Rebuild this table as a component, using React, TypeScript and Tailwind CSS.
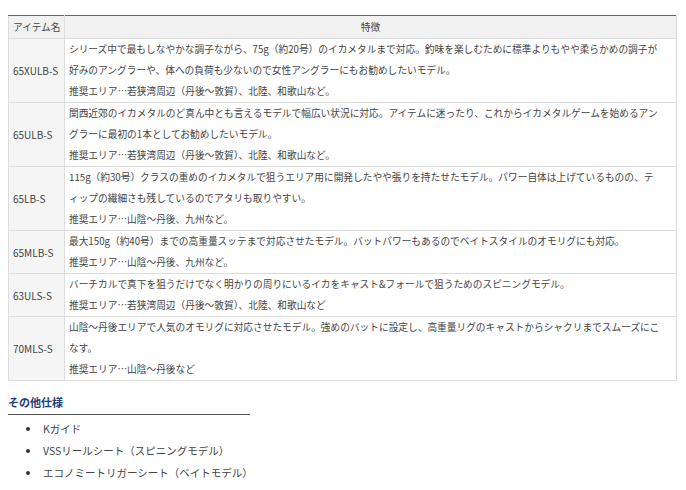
const rows: { name: string; lines: string[] }[] = [
  {
    name: '65XULB-S',
    lines: [
      'シリーズ中で最もしなやかな調子ながら、75g（約20号）のイカメタルまで対応。釣味を楽しむために標準よりもやや柔らかめの調子が',
      '好みのアングラーや、体への負荷も少ないので女性アングラーにもお勧めしたいモデル。',
      '推奨エリア…若狭湾周辺（丹後～敦賀）、北陸、和歌山など。',
    ],
  },
  {
    name: '65ULB-S',
    lines: [
      '関西近郊のイカメタルのど真ん中とも言えるモデルで幅広い状況に対応。アイテムに迷ったり、これからイカメタルゲームを始めるアン',
      'グラーに最初の1本としてお勧めしたいモデル。',
      '推奨エリア…若狭湾周辺（丹後～敦賀）、北陸、和歌山など。',
    ],
  },
  {
    name: '65LB-S',
    lines: [
      '115g（約30号）クラスの重めのイカメタルで狙うエリア用に開発したやや張りを持たせたモデル。パワー自体は上げているものの、テ',
      'ィップの繊細さも残しているのでアタリも取りやすい。',
      '推奨エリア…山陰～丹後、九州など。',
    ],
  },
  {
    name: '65MLB-S',
    lines: [
      '最大150g（約40号）までの高重量スッテまで対応させたモデル。バットパワーもあるのでベイトスタイルのオモリグにも対応。',
      '推奨エリア…山陰～丹後、九州など。',
    ],
  },
  {
    name: '63ULS-S',
    lines: [
      'バーチカルで真下を狙うだけでなく明かりの周りにいるイカをキャスト&フォールで狙うためのスピニングモデル。',
      '推奨エリア…若狭湾周辺（丹後～敦賀）、北陸、和歌山など',
    ],
  },
  {
    name: '70MLS-S',
    lines: [
      '山陰～丹後エリアで人気のオモリグに対応させたモデル。強めのバットに設定し、高重量リグのキャストからシャクリまでスムーズにこ',
      'なす。',
      '推奨エリア…山陰～丹後など',
    ],
  },
];

const extras = ['Kガイド', 'VSSリールシート（スピニングモデル）', 'エコノミートリガーシート（ベイトモデル）'];

export default function App() {
  return (
    <div
      className="min-h-screen bg-white pl-2 pt-[15px] text-[#444]"
      style={{ fontFamily: '"Noto Sans CJK JP", "Noto Sans", sans-serif' }}
    >
      <table className="w-[669px] table-fixed border-collapse border-t border-t-[#666] text-[9.7px]">
        <colgroup>
          <col className="w-[56px]" />
          <col />
        </colgroup>
        <thead>
          <tr className="h-[23px] bg-[#f1f1f1]">
            <th className="border border-[#ddd] border-t-[#666] pl-[4px] text-left font-normal leading-[21px] whitespace-nowrap">
              アイテム名
            </th>
            <th className="border border-[#ddd] border-t-[#666] px-1 text-center font-normal leading-[21px]">
              特徴
            </th>
          </tr>
        </thead>
        <tbody>
          {rows.map((row) => (
            <tr key={row.name}>
              <td className="border border-[#ddd] bg-[#f5f5f5] pl-[4px] align-middle text-[10px] leading-[21px] whitespace-nowrap">
                {row.name}
              </td>
              <td className="border border-[#ddd] px-1 leading-[21px]">
                {row.lines.map((line, i) => (
                  <div key={i} className="whitespace-nowrap">
                    {line}
                  </div>
                ))}
              </td>
            </tr>
          ))}
        </tbody>
      </table>

      <div className="mt-[12px] w-[242px] border-b border-[#555] pb-[3px] text-[11px] font-bold leading-[18px] text-[#1d3c78]">
        その他仕様
      </div>
      <ul className="mt-[5px] space-y-[4px] text-[10.5px]">
        {extras.map((item) => (
          <li key={item} className="flex items-center leading-[18px]">
            <span className="ml-[18px] mr-[13px] h-[4px] w-[4px] rounded-full bg-[#333]" />
            <span>{item}</span>
          </li>
        ))}
      </ul>
    </div>
  );
}
